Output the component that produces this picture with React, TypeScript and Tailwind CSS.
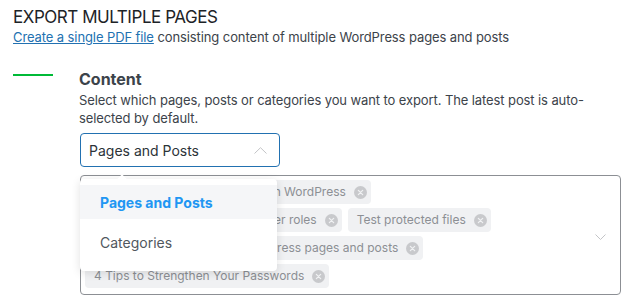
import React from "react";

const XIcon = () => (
  <svg width="13" height="13" viewBox="0 0 14 14" className="shrink-0">
    <circle cx="7" cy="7" r="7" fill="#c8c9cc" />
    <path d="M4.7 4.7 L9.3 9.3 M9.3 4.7 L4.7 9.3" stroke="#f0f1f3" strokeWidth="1.4" strokeLinecap="round" />
  </svg>
);

const Tag = ({ label }: { label: string }) => (
  <div className="flex items-center h-[24px] rounded-[4px] bg-[#f0f1f3] pl-[9px] pr-[4px] gap-[8px] text-[12px] text-[#8c8f94]">
    <span className="whitespace-nowrap">{label}</span>
    <XIcon />
  </div>
);

export default function App() {
  return (
    <div
      className="w-[631px] h-[304px] bg-white overflow-hidden pl-[13px] pt-[7px] text-[#3c434a]"
      style={{ fontFamily: "Inter, 'Liberation Sans', sans-serif" }}
    >
      <div className="text-[17px] leading-[20px] text-[#1d2327] tracking-[-0.45px]">EXPORT MULTIPLE PAGES</div>
      <div className="text-[13px] leading-[20px] tracking-[-0.1px]">
        <a className="text-[#2271b1] underline">Create a single PDF file</a> consisting content of multiple WordPress pages and posts
      </div>
      <div className="flex mt-[22px]">
        <div className="w-[66px] shrink-0 pt-[5px]">
          <div className="w-[40px] h-[2px] bg-[#00ba37]" />
        </div>
        <div className="flex flex-col w-[542px]">
          <div className="text-[16px] leading-[20px] font-bold text-[#3c434a]">Content</div>
          <div className="text-[13px] leading-[18px] mt-[2px] pr-[20px] tracking-[-0.1px]">
            Select which pages, posts or categories you want to export. The latest post is auto-selected by default.
          </div>
          <div className="relative mt-[6px]">
            <div className="ml-[1px] w-[200px] h-[34px] rounded-[4px] border-[1.5px] border-[#2271b1] flex items-center justify-between pl-[8px] pr-[12px] text-[14px] text-[#2c3338]">
              <span>Pages and Posts</span>
              <svg width="13" height="7" viewBox="0 0 13 7">
                <path d="M0.5 6.5 L6.5 0.7 L12.5 6.5" stroke="#c3c4c7" strokeWidth="1" fill="none" />
              </svg>
            </div>
            <div className="mt-[8px] ml-[1px] w-[541px] h-[120px] rounded-[4px] border border-[#8c8f94] flex items-start pl-[4px] pt-[4px] pr-[14px]">
              <div className="flex flex-wrap gap-x-[6px] gap-y-[4px] flex-1">
                <Tag label="How to password protect a file in WordPress" />
                <Tag label="Restrict file access based on user roles" />
                <Tag label="Test protected files" />
                <Tag label="Guides to export multiple WordPress pages and posts" />
                <Tag label="4 Tips to Strengthen Your Passwords" />
              </div>
              <svg width="11" height="6" viewBox="0 0 11 6" className="mt-[54px]">
                <path d="M0.5 0.5 L5.5 5.5 L10.5 0.5" stroke="#c3c4c7" strokeWidth="1" fill="none" />
              </svg>
            </div>
            <div className="absolute left-[1px] top-[46px] w-[197px] rounded-[4px] bg-white shadow-[0_2px_10px_rgba(0,0,0,0.12)] py-[6px]">
              <div className="absolute -top-[3px] left-[38px] w-[8px] h-[8px] bg-white rotate-45" />
              <div className="relative h-[34px] bg-[#f5f6f8] flex items-center pl-[20px] text-[14px] font-bold text-[#2196f3]">
                Pages and Posts
              </div>
              <div className="h-[46px] flex items-center pl-[20px] text-[14px] text-[#50575e]">Categories</div>
            </div>
          </div>
        </div>
      </div>
    </div>
  );
}
